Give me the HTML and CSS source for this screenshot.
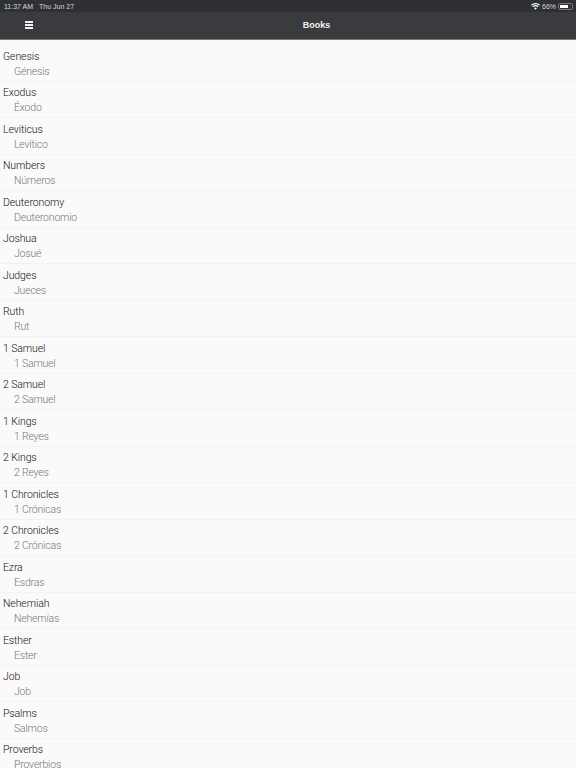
FILE: index.html
```html
<!DOCTYPE html>
<html lang="en">
  <head>
    <meta charset="UTF-8" />
    <meta name="viewport" content="width=device-width, initial-scale=1.0" />
    <title>Books</title>
    <link rel="stylesheet" href="styles.css">
  </head>
  <body>
    <header class="top">
      <div class="status-bar">
        <span>11:37 AM</span>
        <span class="status-date">Thu Jun 27</span>
        <span class="status-right">
          <svg class="wifi" width="9" height="7" viewBox="0 0 18 14">
            <path d="M9 13.5 6.2 10.4a4 4 0 0 1 5.6 0zM4.6 8.6 3 6.9a8.6 8.6 0 0 1 12 0l-1.6 1.7a6.3 6.3 0 0 0-8.8 0zM1.6 5.4 0 3.7a13 13 0 0 1 18 0l-1.6 1.7a10.7 10.7 0 0 0-14.8 0z" fill="#fff"/>
          </svg>
          <span>66%</span>
          <span class="battery"><span class="battery-level"></span></span>
        </span>
      </div>
      <div class="nav-bar">
        <div class="menu-icon"><span></span><span></span><span></span></div>
        <h1 class="titulo">Books</h1>
      </div>
    </header>

    <ul class="book-list">
      <li class="book"><div class="en">Genesis</div><div class="es">Génesis</div></li>
      <li class="book"><div class="en">Exodus</div><div class="es">Éxodo</div></li>
      <li class="book"><div class="en">Leviticus</div><div class="es">Levítico</div></li>
      <li class="book"><div class="en">Numbers</div><div class="es">Números</div></li>
      <li class="book"><div class="en">Deuteronomy</div><div class="es">Deuteronomio</div></li>
      <li class="book"><div class="en">Joshua</div><div class="es">Josué</div></li>
      <li class="book"><div class="en">Judges</div><div class="es">Jueces</div></li>
      <li class="book"><div class="en">Ruth</div><div class="es">Rut</div></li>
      <li class="book"><div class="en">1 Samuel</div><div class="es">1 Samuel</div></li>
      <li class="book"><div class="en">2 Samuel</div><div class="es">2 Samuel</div></li>
      <li class="book"><div class="en">1 Kings</div><div class="es">1 Reyes</div></li>
      <li class="book"><div class="en">2 Kings</div><div class="es">2 Reyes</div></li>
      <li class="book"><div class="en">1 Chronicles</div><div class="es">1 Crónicas</div></li>
      <li class="book"><div class="en">2 Chronicles</div><div class="es">2 Crónicas</div></li>
      <li class="book"><div class="en">Ezra</div><div class="es">Esdras</div></li>
      <li class="book"><div class="en">Nehemiah</div><div class="es">Nehemías</div></li>
      <li class="book"><div class="en">Esther</div><div class="es">Ester</div></li>
      <li class="book"><div class="en">Job</div><div class="es">Job</div></li>
      <li class="book"><div class="en">Psalms</div><div class="es">Salmos</div></li>
      <li class="book"><div class="en">Proverbs</div><div class="es">Proverbios</div></li>
    </ul>
  </body>
</html>
```

FILE: styles.css
```css
html,
body {
  height: 100%;
}

body {
  font-family: "Liberation Sans", Arial, sans-serif;
  margin: 0;
  padding: 0;
  background-color: #fafafa;
  color: #222;
  overflow: hidden;
}

.top {
  background-color: #3a3b3f;
  color: white;
  border-bottom: 1px solid #77787b;
}

.status-bar {
  height: 12px;
  padding: 0 3px 0 4px;
  display: flex;
  align-items: center;
  background-color: #2f3034;
  color: #d8d8d8;
  font-size: 7px;
}

.status-date {
  margin-left: 6px;
}

.status-right {
  margin-left: auto;
  display: flex;
  align-items: center;
  gap: 2px;
}

.battery {
  width: 15px;
  height: 7px;
  padding: 1px;
  box-sizing: border-box;
  border: 1px solid #77787b;
  border-radius: 2px;
}

.battery-level {
  display: block;
  width: 8px;
  height: 100%;
  background-color: white;
}

.nav-bar {
  height: 27px;
  padding: 0 0 2px 57px;
  box-sizing: border-box;
  display: flex;
  justify-content: center;
  align-items: center;
  position: relative;
}

.menu-icon {
  position: absolute;
  left: 25px;
  top: 9px;
  width: 8px;
  display: flex;
  flex-direction: column;
  gap: 1.5px;
}

.menu-icon span {
  height: 1.5px;
  background-color: #f2f2f2;
}

.titulo {
  margin: 0;
  font-size: 9px;
  font-weight: bold;
  color: #f2f2f2;
}

.book-list {
  list-style: none;
  margin: 0;
  padding: 5px 0 0;
}

.book {
  height: 36.5px;
  box-sizing: border-box;
  padding: 3.5px 0 0 3px;
  border-bottom: 1px solid #f1f2f5;
  font-family: Roboto, "Liberation Sans", Arial, sans-serif;
  font-weight: 300;
}

.en {
  font-size: 10.5px;
  line-height: 15px;
  letter-spacing: -0.1px;
  color: #111;
}

.es {
  margin-left: 11px;
  font-size: 10.5px;
  line-height: 15px;
  letter-spacing: -0.2px;
  color: #777;
}
```
